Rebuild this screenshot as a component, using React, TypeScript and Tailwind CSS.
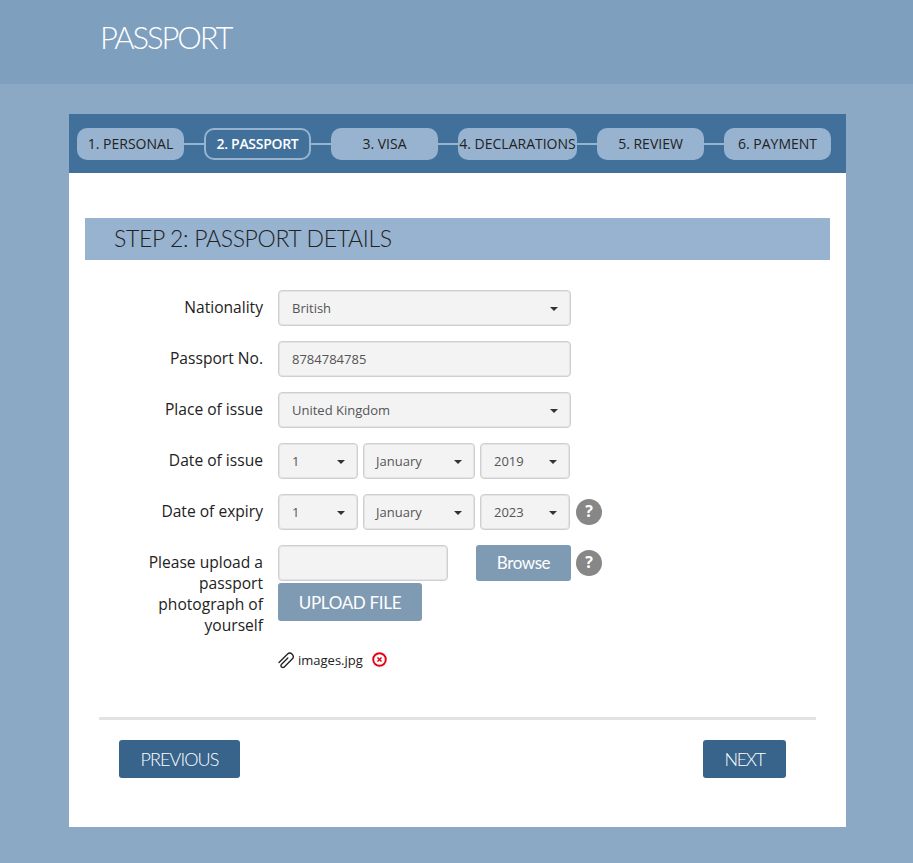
const BODY = "font-['Open_Sans',sans-serif]";
const HEAD = "font-['Lato',sans-serif]";
const FIELD = 'rounded-[4px] border border-[#cfcfcf] bg-[#f3f3f3] shadow-[inset_0_0_0_1px_#e4e4e4]';

const steps = [
  { label: '1. PERSONAL', width: 'w-[107px]' },
  { label: '2. PASSPORT', width: 'w-[107px]', active: true },
  { label: '3. VISA', width: 'w-[107px]' },
  { label: '4. DECLARATIONS', width: 'w-[119px]' },
  { label: '5. REVIEW', width: 'w-[107px]' },
  { label: '6. PAYMENT', width: 'w-[107px]' },
];

function Caret() {
  return <span className="h-0 w-0 border-x-[4px] border-t-[4px] border-x-transparent border-t-[#333]" />;
}

function Select({ value, width, padding = 'pl-[13px] pr-3' }: { value: string; width: string; padding?: string }) {
  return (
    <div className={`flex h-9 items-center justify-between pt-[2px] text-[13px] text-[#555] ${FIELD} ${width} ${padding}`}>
      <span>{value}</span>
      <Caret />
    </div>
  );
}

function Help({ offset = 'ml-[5px]' }: { offset?: string }) {
  return (
    <span
      className={`flex h-[26px] w-[26px] shrink-0 items-center justify-center rounded-full bg-[#878787] pb-[2px] text-[16px] font-bold text-white ${offset}`}
    >
      ?
    </span>
  );
}

function PaperclipIcon() {
  return (
    <svg viewBox="0 0 17 17" className="-ml-[2px] h-5 w-5" fill="none" stroke="#222" strokeWidth="1.15">
      <g transform="rotate(45 8.5 8)">
        <path d="M8.2 5.5V13a1.6 1.6 0 0 0 3.2 0V3.5a2.9 2.9 0 0 0-5.8 0V13.5" strokeLinecap="round" />
      </g>
    </svg>
  );
}

function RemoveIcon() {
  return (
    <svg viewBox="0 0 15 15" className="mb-[3px] ml-[9px] h-[15px] w-[15px]" fill="none" stroke="#e8000f">
      <circle cx="7.5" cy="7.5" r="6.3" strokeWidth="1.9" />
      <path d="M5.5 5.5l4 4M9.5 5.5l-4 4" strokeWidth="1.5" />
    </svg>
  );
}

function Row({ label, children }: { label: string; children: React.ReactNode }) {
  return (
    <div className="mb-[15px] flex items-start">
      <label className="w-[178px] pt-[7px] text-right text-[15.6px] leading-[21px] text-[#222]">{label}</label>
      <div className="ml-[15px] flex items-center">{children}</div>
    </div>
  );
}

function DateRow({ day, month, year }: { day: string; month: string; year: string }) {
  return (
    <div className="flex gap-[5px]">
      <Select value={day} width="w-[80px]" />
      <Select value={month} width="w-[112px]" padding="pl-3 pr-3" />
      <Select value={year} width="w-[90px]" />
    </div>
  );
}

export default function App() {
  return (
    <div className={`h-[863px] overflow-hidden bg-[#8ba9c5] ${BODY}`}>
      <header className="h-[84px] bg-[#7f9fbf] pl-[100px] pt-[18px]">
        <h1 className={`text-[31px] leading-[38px] font-light tracking-[-2.1px] text-white ${HEAD}`}>PASSPORT</h1>
      </header>

      <main className="mx-[69px] mt-[30px] h-[713px] w-[777px] bg-white">
        {/* step bar */}
        <nav className="flex h-[59px] items-center bg-[#41719b] pl-2">
          {steps.map((step, i) => (
            <div key={step.label} className="flex items-center">
              {i > 0 && <span className="h-[2px] w-5 bg-[#97b3d0]" />}
              <div
                className={`flex h-8 items-center justify-center rounded-[10px] text-[14px] whitespace-nowrap ${step.width} ${
                  step.active
                    ? 'border-2 border-[#97b3d0] bg-[#41719b] font-semibold tracking-[-0.3px] text-white'
                    : 'bg-[#97b3d0] text-[#222]'
                }`}
              >
                {step.label}
              </div>
            </div>
          ))}
        </nav>

        <h2
          className={`mx-4 mt-[45px] flex h-[42px] items-center bg-[#97b3d0] pb-[2px] pl-[29px] text-[23px] font-light tracking-[-0.35px] text-[#222] ${HEAD}`}
        >
          STEP 2: PASSPORT DETAILS
        </h2>

        <form className="mt-[30px] pl-4">
          <Row label="Nationality">
            <Select value="British" width="w-[293px]" />
          </Row>
          <Row label="Passport No.">
            <div className={`flex h-9 w-[293px] items-center pl-[13px] pt-[2px] text-[13px] text-[#555] ${FIELD}`}>
              8784784785
            </div>
          </Row>
          <Row label="Place of issue">
            <Select value="United Kingdom" width="w-[293px]" />
          </Row>
          <Row label="Date of issue">
            <DateRow day="1" month="January" year="2019" />
          </Row>
          <Row label="Date of expiry">
            <DateRow day="1" month="January" year="2023" />
            <Help offset="ml-[6px]" />
          </Row>

          <div className="flex items-start">
            <label className="w-[178px] pl-7 pt-[7px] text-right text-[15.6px] leading-[21px] text-[#222]">
              Please upload a passport photograph of yourself
            </label>
            <div className="ml-[15px]">
              <div className="flex items-center">
                <div className={`h-9 w-[170px] ${FIELD}`} />
                <button
                  type="button"
                  className={`ml-7 h-9 w-[95px] rounded-[3px] bg-[#7f9ab3] text-[17px] tracking-[-0.4px] text-white ${HEAD}`}
                >
                  Browse
                </button>
                <Help />
              </div>
              <button
                type="button"
                className={`mt-[2px] block h-[38px] w-[144px] rounded-[3px] bg-[#7f9ab3] pt-[1px] text-[17px] tracking-[-0.3px] text-white ${HEAD}`}
              >
                UPLOAD FILE
              </button>
              <div className="mt-[30px] flex items-center text-[13px] text-[#222]">
                <PaperclipIcon />
                <span className="ml-[2px]">images.jpg</span>
                <RemoveIcon />
              </div>
            </div>
          </div>
        </form>

        <div className="mx-[30px] mt-[46px] h-[3px] bg-[#e3e3e3]" />

        <div className="mt-5 flex justify-between pl-[50px] pr-[60px]">
          <button
            type="button"
            className={`h-[38px] w-[121px] rounded-[3px] bg-[#38648c] pt-[1px] text-[18px] font-light tracking-[-0.9px] text-white ${HEAD}`}
          >
            PREVIOUS
          </button>
          <button
            type="button"
            className={`h-[38px] w-[83px] rounded-[3px] bg-[#38648c] pt-[1px] text-[18px] font-light tracking-[-1.4px] text-white ${HEAD}`}
          >
            NEXT
          </button>
        </div>
      </main>
    </div>
  );
}
